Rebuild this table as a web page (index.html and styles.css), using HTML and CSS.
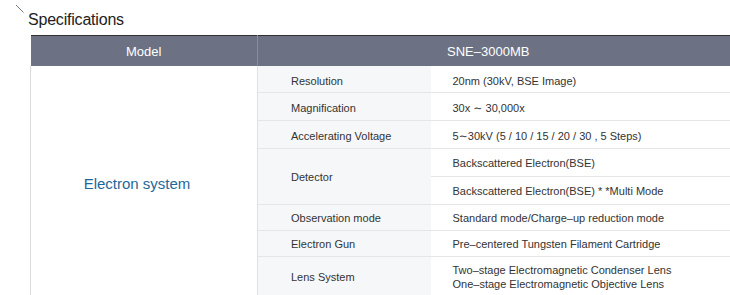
FILE: index.html
```html
<!DOCTYPE html>
<html>
<head>
<meta charset="utf-8">
<link rel="stylesheet" href="styles.css">
</head>
<body>
<div class="title">
  <svg class="slash" width="10" height="10" viewBox="0 0 10 10"><line x1="1" y1="1" x2="8.5" y2="8.5" stroke="#555" stroke-width="0.8"/></svg>
  <h2>Specifications</h2>
</div>
<table class="spec">
  <colgroup><col class="c1"><col class="c2"><col class="c3"></colgroup>
  <thead>
    <tr><th>Model</th><th colspan="2" class="model">SNE–3000MB</th></tr>
  </thead>
  <tbody>
    <tr class="first"><td rowspan="9" class="group">Electron system</td><td class="label">Resolution</td><td class="val">20nm (30kV, BSE Image)</td></tr>
    <tr class="tall low"><td class="label">Magnification</td><td class="val">30x <span class="tilde">∼</span> 30,000x</td></tr>
    <tr class="tall low"><td class="label">Accelerating Voltage</td><td class="val">5<span class="tilde">∼</span>30kV (5 / 10 / 15 / 20 / 30 , 5 Steps)</td></tr>
    <tr class="tall"><td class="label" rowspan="2">Detector</td><td class="val">Backscattered Electron(BSE)</td></tr>
    <tr class="tall"><td class="val">Backscattered Electron(BSE) * *Multi Mode</td></tr>
    <tr class="short"><td class="label">Observation mode</td><td class="val">Standard mode/Charge–up reduction mode</td></tr>
    <tr class="short"><td class="label">Electron Gun</td><td class="val">Pre–centered Tungsten Filament Cartridge</td></tr>
    <tr><td class="label">Lens System</td><td class="val two">Two–stage Electromagnetic Condenser Lens<br>One–stage Electromagnetic Objective Lens</td></tr>
  </tbody>
</table>
</body>
</html>
```
FILE: styles.css
```css
html, body {
  margin: 0;
  padding: 0;
  background: #fff;
  font-family: "Liberation Sans", Arial, sans-serif;
  color: #333;
}
.title {
  position: relative;
  height: 35px;
}
.slash {
  position: absolute;
  left: 15px;
  top: 4px;
}
.title h2 {
  margin: 0;
  padding: 10px 0 0 28px;
  font-size: 16px;
  font-weight: normal;
  color: #222;
  letter-spacing: -0.2px;
  line-height: 20px;
}
.spec {
  margin-left: 30px;
  width: 700px;
  border-collapse: collapse;
  table-layout: fixed;
  font-size: 11px;
}
.c1 { width: 227px; }
.c2 { width: 173px; }
.c3 { width: 300px; }
.spec th {
  background: #6c7283;
  color: #fff;
  font-weight: normal;
  font-size: 13px;
  height: 30px;
  padding: 0;
  border-top: 1px solid #2e2e33;
  border-right: 1px solid #8a8f9c;
  text-align: center;
}
.spec th.model {
  border-right: none;
  padding-right: 12px;
}
.spec td {
  padding-top: 8px;
  padding-bottom: 5px;
  line-height: 13px;
  border-bottom: 1px solid #e6e6e8;
  vertical-align: middle;
}
.spec tr.first td {
  padding-top: 9px;
  padding-bottom: 4px;
}
.spec tr.tall td {
  padding-top: 8px;
  padding-bottom: 6px;
}
.spec tr.tall.low td {
  padding-top: 9px;
  padding-bottom: 5px;
}
.spec tr.short td {
  padding-top: 7px;
  padding-bottom: 5px;
}
.spec td.group {
  border-left: 1px solid #dcdcdc;
  border-right: 1px solid #e0e0e0;
  border-bottom: none;
  text-align: center;
  color: #1f6799;
  font-size: 15px;
  padding-right: 15px;
}
.spec td.label {
  background: #f6f7f9;
  padding-left: 33px;
}
.spec td.val {
  padding-left: 22px;
}
.tilde {
  font-family: "DejaVu Sans", sans-serif;
  font-size: 11px;
}
.spec td.two {
  line-height: 14px;
  padding-top: 6px;
  padding-bottom: 4px;
}
```
